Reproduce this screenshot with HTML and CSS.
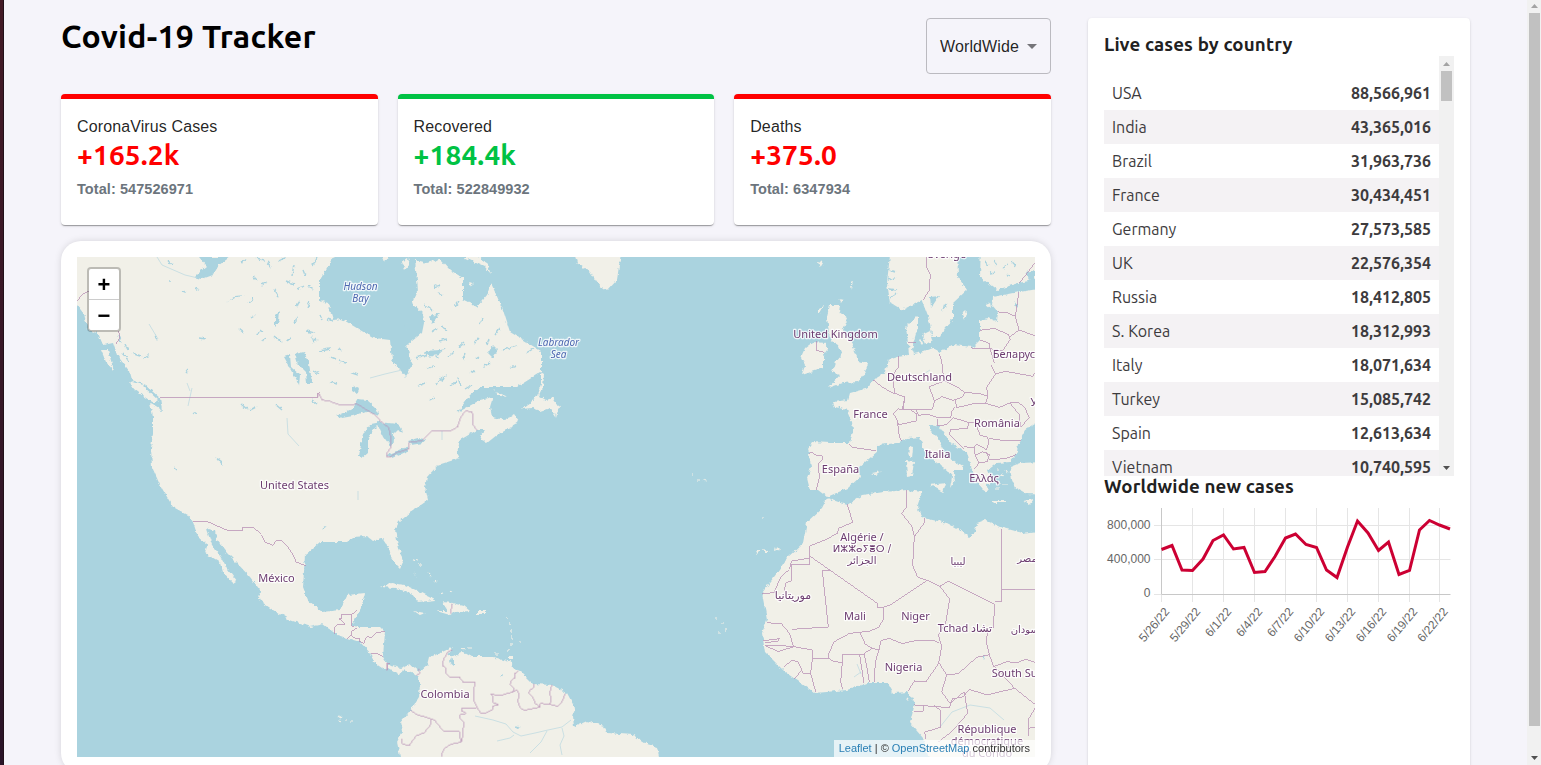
FILE: index.html
```html
<!DOCTYPE html>
<html lang="en">
<head>
<meta charset="utf-8">
<title>Covid-19 Tracker</title>
<link rel="stylesheet" href="styles.css">
</head>
<body>
<div class="window-edge"></div>
<div class="app">
  <main class="app-left">
    <header class="header">
      <h1 class="title">Covid-19 Tracker</h1>
      <div class="select"><span>WorldWide</span><svg class="caret" viewBox="0 0 10 5"><path d="M0 0h10L5 5z"/></svg></div>
    </header>
    <section class="stats">
      <article class="card stat red"><p class="stat-label">CoronaVirus Cases</p><h2 class="stat-value">+165.2k</h2><p class="stat-total">Total: 547526971</p></article>
      <article class="card stat green"><p class="stat-label">Recovered</p><h2 class="stat-value">+184.4k</h2><p class="stat-total">Total: 522849932</p></article>
      <article class="card stat red"><p class="stat-label">Deaths</p><h2 class="stat-value">+375.0</h2><p class="stat-total">Total: 6347934</p></article>
    </section>
    <section class="map-card">
      <div class="map">
        <svg class="map-svg" viewBox="77 257 958 500">
          <defs>
            <filter id="coast" filterUnits="userSpaceOnUse" x="60" y="240" width="990" height="530" color-interpolation-filters="linearRGB">
              <feTurbulence type="fractalNoise" baseFrequency=".22" numOctaves="3" seed="7" result="n"/>
              <feDisplacementMap in="SourceGraphic" in2="n" scale="4.500" xChannelSelector="R" yChannelSelector="G"/>
            </filter>
          </defs>
          <rect class="sea" x="77" y="257" width="958" height="500"/>
          <g filter="url(#coast)">
            <g class="land">
              <!-- Americas -->
              <path d="M65 245H340L333 257 320 280V300L328 303 333 320 342 319 360 330 374 338 390 340 392 360 405 377 412 367 407 345 422 333 424 323 423 313 412 303 418 290 415 260 427 263 440 259 450 270 463 278V300L477 307 487 295 491 283 503 310 510 332 541 351V372L517 387H480L470 395 457 413 480 400 493 397 490 407 492 417 505 420 514 414 519 421 495 433 483 442 480 436 485 430 477 430 460 440 457 453 460 458 438 465 427 477 425 487 428 500 411 512 399 522 395 530 397 540 403 562 400 569 396 565 390 555 388 547 382 538 373 541 367 536 353 537 347 542H320L305 555 303 587 308 600 322 612 340 610 347 595 365 593 360 610 352 625 357 627H380L385 632 383 657 388 665 400 668 410 664 420 672 428 665 430 657 440 653 453 647 447 655 453 657 463 652 472 657H493L512 663 513 668 520 671 533 684 552 685 567 693 575 708 573 717 574 727 587 721 603 726 607 733 633 735 647 744 657 747 662 770H403L397 742 402 732 400 723 412 708 419 697 420 683 418 675 403 670 400 675 388 668 385 670 373 662 372 655 360 642 337 635 323 624 310 627 290 620 273 610 259 600 260 590 250 577 237 563 227 553 217 540 215 531 206 528 212 545 220 555 228 570 236 581 233 583 223 572 220 562 205 553 207 545 198 537 193 522 188 515 173 507 160 485 152 467 151 448 153 433V417L150 403 162 410 160 398 145 385 132 380 130 372 117 355 113 343 103 345 98 333 88 330 84 314 77 305 65 300z"/>
              <path d="M129 381L142 385 158 400 154 403 143 396 134 389zM101 350H108L114 371 106 362zM541 373L541 384 536 398 522 409 532 408 541 411 550 408 556 417 559 407 553 398 546 400 539 396 543 387 544 375zM493 390L508 397 500 396zM482 440L500 427 514 421 517 424 497 435 487 443z"/>
              <path d="M380 587L391 583 405 585 420 592 436 600 418 602 412 594 396 588zM442 602L452 603 464 606 470 611 455 612 450 615 436 611H448zM414 611L425 613 420 615zM477 611H485V614H477zM414 571L417 578 415 574zM509 656H513V660H509zM382 257H390L384 262zM402 262L408 258 410 264 405 270zM463 257L485 267 491 274 487 262 478 257zM470 282L474 284 471 286z"/>
              <!-- Europe, Greenland and islands -->
              <path d="M572 245L577 263 590 272 598 284 607 291 617 280 622 245zM1045 418L1025 430 1018 443 1017 453 1010 462 997 463 988 470 993 482 987 485 988 493 980 488 975 477 971 467 967 453 950 442 940 427 930 425V430L937 437 947 457 963 467V470L953 470 955 480 950 488 952 477 947 470 933 460 923 448 920 437 908 438 897 443 877 445V452L858 468 860 477 848 488 827 497 818 490H810L807 478 811 467 808 448 812 442 830 443H850L853 430 852 422 847 410 835 407 833 402 848 400 850 393 868 388 873 380 885 373 888 360 898 357 909 355 908 343 906 327 918 315V327L915 337 912 349 914 354 923 352 933 348 940 352 953 345 973 347 980 340V320L988 318 997 322 998 312 992 305 993 297 1013 293 1045 288z"/>
              <path d="M891 245L887 283 890 303 902 310 922 300 927 313 933 337H940L945 327 953 320V303L967 290 958 277 957 245zM981 245L980 277 997 290 1018 283 1045 278V245zM922 335L930 331 933 340 926 344zM962 313L967 311 964 321zM918 340L924 342 922 345zM986 304L990 302 991 308z"/>
              <path d="M830 305H840L839 312 848 318 843 330 852 345 858 357V361L868 363 865 373 858 382 843 383 828 388 840 375 832 372 835 363 842 355 838 345 830 340 827 317zM813 342L825 343 828 350 823 357V368L802 375 805 365 801 357 805 348zM819 308L823 306 819 315zM851 283L853 281 851 290zM839 299L843 300 841 303zM818 262L823 263 820 268z"/>
              <path d="M909 447L913 448 912 458 908 455zM906 461L914 462 912 476 907 477zM930 485L946 483 943 492zM992 501L1006 501 1006 503 994 503zM1010 467L1020 463 1045 462V495L1027 494 1015 487 1012 480zM1024 501L1034 499 1030 504zM872 473L882 471 876 475z"/>
              <!-- Africa -->
              <path d="M827 498L847 505 862 495 883 492 907 490 922 492 917 507 923 518 947 523 960 530 970 537 975 532 977 523 985 520 1000 527 1023 533 1045 530V770H932L923 738 910 723 915 703 908 692 893 693 887 683H867L847 690 815 693 785 672 765 652 762 633 767 620 762 593 777 573 787 558 803 543 807 522 822 508zM756 550L760 551 757 554zM763 549L770 552 764 552zM776 546L780 550 775 552zM905 699L909 697 907 701z"/>
            </g>
            <!-- Bahamas, Lesser Antilles, Azores, Cape Verde, Aegean -->
            <path class="isles" d="M413 560l5 1M420 563v3M428 573l3 4M434 580l4 3M441 594l3-1M450 591l3 1M461 648l4 1M468 648l3 0M495 654l3 0M507 617v2M509 623v3M511 630v3M512 636v3M511 643v3M509 649v2M519 642h2M691 475h2M697 480h3M703 480l3 1M715 619h2M718 632h3M725 629v3M721 624h2M762 518h2M338 716l3 2M338 721l4 1M345 720h2M350 722h2M997 470h3M1001 475l3 1M998 482h3M1004 484h3M1006 470l2 3M996 489h3"/>
            <g class="lake">
              <path d="M195 277L202 270 207 266 199 257H230L219 265 213 275 202 279zM226 303L235 296 245 295 232 299zM275 316L280 311 279 323 275 327zM293 323L297 317 296 325zM295 354L304 352 309 363 312 384 307 384 306 372 298 364zM284 357L290 355 291 367 300 375 299 386 292 371zM352 385L359 389 357 394 352 391zM336 416L352 409 358 399 367 400 375 407 379 416 366 411 353 416 342 418zM359 456L363 433 371 424 381 422 373 430 368 440V453L362 458zM377 422L388 423 398 424 404 434 397 430 393 434 394 442 391 447 383 436zM387 455L401 449 410 446 406 452 392 458zM408 441L419 438 426 439 423 443 411 445zM439 380L446 375 443 382zM404 325L410 323 411 332 405 329zM424 351L441 350 448 346 439 354 429 357zM488 353L493 345 498 350 493 358zM428 317L440 313 433 324zM216 457L222 461 222 465zM451 658L454 660 454 666 449 662zM501 675L503 675 500 679zM515 726L521 728 517 729zM930 297L939 296 935 302 931 308zM944 305L948 302 942 312zM1015 301L1018 305 1016 308zM1026 272L1035 270 1035 290zM982 656L986 655 984 660z"/>
            </g>
            <g class="streaks">
              <path d="M241 263l5-4M256 258l8 2M267 262l4 5M279 261l6-3M292 276l2-12M303 270l2 5M313 265l4-8M253 276l4 4M262 285l5-3M274 289l5 7M286 281l8 3M297 290l7-4M248 303l5-4M251 318l5-3M239 329l5 4M256 334l7-3M262 342l3-5M275 337l6 5M286 340l4-2M296 307l4-6M308 285l5 5M310 301l-3 7M312 343l4-6M307 331l7 2M320 315l2 5M327 319l7 2M312 337l5 4M319 351l11-2M331 357l5 2M338 348l5 3M313 370l6 4M346 363l-7-2M312 400l5 4M337 384l-7-2M352 373l6 2M168 261l5 4M182 291l4 1M169 281l2 0M195 288l4 2M199 338l7 1M241 404l7 6M250 410l6-3M275 404l7 6M155 336l3 3M186 373l3-4M144 357l5-2M132 353l9 3M118 336l3 6M125 344l3 6M122 353l7 8M194 412l3 2M434 287l6-2M425 305l7 5M443 295l-5-2M455 306l4-5M432 332l6-4M442 327l5 3M447 339l-8 2M459 347l5-4M465 354l-2 6M476 359l4-3M478 338l-4 5M484 366l6-3M418 386l8-3M442 376l-5 8M450 386l6-4M458 378l3 8M470 371l5 2M465 389l7-4M427 368l7-2M416 358l12-4M430 400l5-3M495 335l5-7M503 350l13-4M526 353l7-4M510 368l6-2M479 324l3-6M489 340l-2 5M435 354l4 4M454 352l-5 5M174 467l2 2M322 529l4-3M889 270l6 2M888 280l7-2M889 289l7 1M891 297l6-4M985 262l4 3M994 260l3 6M1003 268l5-3M1012 261l3 5M990 273l5-1M1006 276l4-2"/>
            </g>
          </g>
          <g class="rivers">
            <path d="M475 716L493 720 506 724 513 732 521 736 535 733 548 730 562 727 571 720M497 741L510 738 514 735M547 731L541 742 530 753M562 728L564 736 560 745 562 755M287 418L288 434 299 446M149 324L158 339M157 257L162 265 185 275 198 278M370 378L385 374 402 370M914 380L930 370M940 727L952 712 970 705 990 708 1004 720M854 677L861 672M857 664L861 674M187 383l3 8M192 388l-4 18M442 431v9M358 491v9"/>
          </g>
          <g class="borders">
            <g transform="translate(60 240) scale(.33333)"><path d="M51 183L68 163 87 153M172 272L179 280V293L168 312M300 472H773V460L781 458"/></g>
            <g transform="translate(310 240) scale(.33333)"><path d="M22 472L27 460 37 480 60 484 85 493 128 496 138 490 198 527 211 543 235 562 240 575 244 620 230 640 229 650 240 651 260 638 298 626 297 606 336 603 367 572 427 571 442 561 452 531 466 513 484 515 490 522V557L502 570"/></g>
            <g transform="translate(60 490) scale(.33333)"><path d="M399 95L438 93 502 121H549V112H581L604 134 615 156 638 166 650 151H663L678 164 700 195 708 216 738 227M824 432V410L832 405H854V400L837 386 845 384V373H875V408L881 410M875 373L892 361M861 446L874 436 873 425 892 413M874 436L885 445 900 445V455L911 460 920 440 935 442 950 428 975 424M934 491L955 492 968 499M982 541V522L990 520"/></g>
            <g transform="translate(380 540) scale(.33333)"><path d="M22 368V392M116 385L119 400 108 407M215 191L213 220M218 329L204 335 191 358 187 377 197 383 199 401 208 411H238L250 427 286 428 282 445V484L291 502 302 520H317L340 507V498L354 494 339 487V470L332 463 365 466 399 455 402 446 390 434 394 422 405 413 403 402 416 391M399 455L411 449 417 462 414 485 420 502 432 511 481 501 466 490 457 470 447 459 450 449 461 444V431M481 501L480 490 510 493 514 475 509 462 515 435M510 493L533 499 544 488 556 462M291 502L286 505H245V514L257 517V522L241 523V536L251 545 249 580 245 606 215 612 194 624 186 640V650M91 510L109 523 152 536 165 542 190 573H233L241 577 238 591 245 606M152 536V554L133 578 108 588 87 617 66 611 65 595"/></g>
            <g transform="translate(780 240) scale(.33333)"><path d="M441 51V83L451 103 448 150 429 181M765 68L718 130M109 302V331L133 337M86 641L94 636 111 647 127 648 126 661 115 672 118 712 109 751M206 613L218 622 257 628 289 632M357 349V379L344 397 340 430 344 460 375 471 369 508M280 420L305 440 335 458 344 460M478 342L485 361 488 397 493 408M384 308L409 307M448 440L493 423 530 440 555 458 546 472 520 481 485 470 463 484ZM375 471L367 507 408 510 458 507 463 484M555 458L597 460 623 469 617 490 586 490 530 503 526 481M617 490L658 502 690 489 717 488 735 504 748 534 722 561 717 523 690 489M634 376L647 402 620 442 623 469M647 402L676 394 759 409 765 398M600 271L643 265 684 283 691 298 668 332 630 326 574 324M600 300L628 310 630 326 643 370M655 216L680 217 706 229 717 270 765 287M706 229L717 155M717 270L691 290M340 520L352 541 356 554 409 543 410 522 390 508 355 507 340 520M352 541L358 589 365 603M409 510L415 526 444 523 471 532 512 533 515 515 524 502M471 536L473 557 500 554 520 533 566 548 562 566 513 568 507 582 552 628M566 548L586 548 600 585 623 592 627 609 619 629 590 612 582 624 553 620M627 595L672 602 723 600M619 635L628 660 680 655 708 644M582 624L586 647 597 669 583 687M586 647L607 635 628 643 622 665 597 669"/></g>
            <g transform="translate(740 490) scale(.33333)"><path d="M322 43L338 97 296 115 293 129 262 147 209 168V225H154V273L138 278 133 302M209 198L412 340V352H431V388L415 413 386 424 329 430 283 455 266 490V505L219 507 216 480 161 470 148 430 125 402 80 398M161 470L128 467 74 466M247 243H273M247 243L265 411 155 418M431 351L452 344 562 271 533 262 518 226 523 140 515 108 485 70 500 50V0M523 140L553 98V83M562 271L600 289 625 273 763 342 761 413 742 415 740 460 748 494 761 530 800 515 830 518 859 508 885 517M600 289L629 328 617 398 595 435 605 470 596 520 558 575 523 573 505 602M785 118V334H764M785 298H885M361 430L376 463 398 475 417 480 406 515 403 575M417 480L423 452 447 445 487 461 521 453 583 452 598 460M398 475L372 490 381 535 388 577M372 493H309L302 575 308 598M359 495L372 580M266 505L280 514 309 518M217 507L212 550 227 605M131 530L155 512 173 514 190 550 212 550M163 568L182 544M74 466L115 485 161 470M70 452L119 446 111 455 75 457M598 520L620 555 655 551 710 502 748 494M620 555L605 605 630 640 673 605 683 670 635 725 595 756M523 645L628 653 637 627 670 620 688 598 740 615 824 595 770 536 760 528M523 664H550V645M581 645L600 660 602 712 576 720 554 725 557 746M824 595L885 643M885 655L864 690 867 737M864 715L885 712M67 311L102 308 122 262 148 238 155 213 209 204"/></g>
          </g>
          <g class="places" text-anchor="middle">
            <text x="294.500" y="489">United States</text><text x="276.500" y="582">México</text><text x="445" y="698">Colombia</text><text x="835.500" y="338">United Kingdom</text><text x="919.500" y="381">Deutschland</text><text x="870.500" y="418">France</text><text x="840.500" y="473">España</text><text x="937.500" y="458">Italia</text><text x="997" y="427">România</text><text x="984" y="482">Ελλάς</text><text x="1017" y="358">Беларусь</text><text x="1051" y="406">Україна</text><text x="947" y="258">Sverige</text>
            <text x="862" y="541">Algérie /</text><text class="script" x="862" y="552">ⵍⵣⵣⴰⵢⴻⵔ /</text><text class="script" x="862" y="564">الجزائر</text><text class="script" x="958" y="565">ليبيا</text><text class="script" x="1027" y="562">مصر</text><text class="script wide" x="793" y="599">موريتانيا</text><text x="855" y="620">Mali</text><text x="915.500" y="620">Niger</text><text x="965" y="632">Tchad تشاد</text><text class="script" x="1028" y="633">السودان</text><text x="903.500" y="671">Nigeria</text><text x="1024.500" y="677">South Sudan</text><text x="987" y="733">République</text><text x="987" y="745">démocratique</text><text x="987" y="757">du Congo</text>
          </g>
          <g class="waters" text-anchor="middle"><text x="360.500" y="290">Hudson</text><text x="360.500" y="302">Bay</text><text x="558.500" y="346">Labrador</text><text x="558.500" y="358">Sea</text></g>
        </svg>
        <div class="zoom"><span>+</span><span>−</span></div>
        <div class="credit"><a>Leaflet</a> | © <a>OpenStreetMap</a> contributors</div>
      </div>
    </section>
  </main>
  <aside class="card side">
    <h3 class="side-title">Live cases by country</h3>
    <div class="list">
      <div class="rows">
        <div class="row"><span>USA</span><b>88,566,961</b></div>
        <div class="row"><span>India</span><b>43,365,016</b></div>
        <div class="row"><span>Brazil</span><b>31,963,736</b></div>
        <div class="row"><span>France</span><b>30,434,451</b></div>
        <div class="row"><span>Germany</span><b>27,573,585</b></div>
        <div class="row"><span>UK</span><b>22,576,354</b></div>
        <div class="row"><span>Russia</span><b>18,412,805</b></div>
        <div class="row"><span>S. Korea</span><b>18,312,993</b></div>
        <div class="row"><span>Italy</span><b>18,071,634</b></div>
        <div class="row"><span>Turkey</span><b>15,085,742</b></div>
        <div class="row"><span>Spain</span><b>12,613,634</b></div>
        <div class="row"><span>Vietnam</span><b>10,740,595</b></div>
      </div>
      <div class="bar list-bar"><svg class="arrow up" viewBox="0 0 7 4"><path d="M0 4h7L3.500 0z"/></svg><i class="thumb"></i><svg class="arrow down" viewBox="0 0 7 4"><path d="M0 0h7L3.500 4z"/></svg></div>
    </div>
    <h3 class="side-title">Worldwide new cases</h3>
    <svg class="chart" viewBox="1104 500 350 150">
      <g class="grid">
        <path d="M1154 525.500H1450.500M1154 559.500H1450.500M1192.500 508V602M1223.500 508V602M1254.500 508V602M1285.500 508V602M1316.500 508V602M1347.500 508V602M1378.500 508V602M1409.500 508V602M1439.500 508V602M1154 594.500H1161M1161.500 595V602"/>
        <path class="axis" d="M1161.500 508V594.500H1450.500"/>
      </g>
      <polyline class="line" points="1161.500,549.500 1172,545.500 1182,570 1192.500,570.500 1203,559 1213,540.500 1223.500,535 1233.500,549 1244,547.500 1254.500,572.500 1265,571.500 1275,556.500 1285.500,538 1295.500,534 1306,544.500 1316.500,547.500 1326.500,570 1337,577.500 1347.500,547 1357.500,521 1368,533 1378.500,550.500 1388.500,542 1399,574.500 1409.500,570.500 1419.500,530 1429.500,520.500 1439.500,525 1450,529"/>
      <g class="ticks" text-anchor="end">
        <text x="1150.500" y="529">800,000</text><text x="1150.500" y="563">400,000</text><text x="1150.500" y="597">0</text>
        <text transform="translate(1170 612) rotate(-50)">5/26/22</text><text transform="translate(1201 612) rotate(-50)">5/29/22</text><text transform="translate(1232 612) rotate(-50)">6/1/22</text><text transform="translate(1263 612) rotate(-50)">6/4/22</text><text transform="translate(1294 612) rotate(-50)">6/7/22</text><text transform="translate(1325 612) rotate(-50)">6/10/22</text><text transform="translate(1356 612) rotate(-50)">6/13/22</text><text transform="translate(1387 612) rotate(-50)">6/16/22</text><text transform="translate(1418 612) rotate(-50)">6/19/22</text><text transform="translate(1448.500 612) rotate(-50)">6/22/22</text>
      </g>
    </svg>
  </aside>
</div>
<div class="bar page-bar"><svg class="arrow up" viewBox="0 0 7 4"><path d="M0 4h7L3.500 0z"/></svg><i class="thumb"></i><svg class="arrow down" viewBox="0 0 7 4"><path d="M0 0h7L3.500 4z"/></svg></div>
</body>
</html>
```
FILE: styles.css
```css
* { box-sizing: border-box; margin: 0; }
body { display: flex; height: 765px; overflow: hidden; background: #f5f4fa; color: #000; font: 16px/1.5 "Liberation Sans", sans-serif; }
.window-edge { flex: none; width: 4px; background: linear-gradient(#431a26, #2a1428); border-right: 1px solid #211019; }
.app { flex: 1; display: flex; gap: 37px; padding: 18px 57px 0; align-items: flex-start; }
.app-left { width: 990px; }
.header { display: flex; justify-content: space-between; align-items: flex-start; height: 76px; }
.title { font: 700 32px/37px Ubuntu, "Noto Sans", sans-serif; letter-spacing: .3px; }
.select { width: 125px; height: 56px; border: 1px solid #bbbac0; border-radius: 4px; display: flex; align-items: center; gap: 8px; padding: 1px 0 0 13px; letter-spacing: .12px; color: rgba(0,0,0,.87); }
.caret { width: 10px; height: 5px; fill: #757479; }
.card { background: #fff; border-radius: 4px; box-shadow: 0 2px 1px -1px rgba(0,0,0,.2), 0 1px 1px rgba(0,0,0,.14), 0 1px 3px rgba(0,0,0,.12); }
.stats { display: grid; grid-template-columns: repeat(3, 1fr); gap: 19.800px; }
.stat { height: 131px; padding: 16px; border-top: 5px solid red; overflow: hidden; }
.stat-label { line-height: 24px; letter-spacing: .12px; color: rgba(0,0,0,.87); }
.stat-value { font: 700 28px/32px Ubuntu, "Noto Sans", sans-serif; letter-spacing: .15px; color: red; }
.green { border-color: #00c244; }
.green .stat-value { color: #00c244; }
.stat-total { font-size: 14.500px; font-weight: 700; line-height: 20px; letter-spacing: .07px; margin-top: 8px; color: #6c757d; }
.map-card { margin-top: 16px; height: 532px; padding: 16px; background: #fff; border-radius: 20px; box-shadow: 0 0 8px -2px rgba(0,0,0,.22); }
.map { position: relative; height: 500px; overflow: hidden; }
.map-svg { display: block; width: 958px; height: 500px; }
.sea, .lake { fill: #aad3df; }
.land { fill: #f1f0e8; }
.isles { fill: none; stroke: #f1f0e8; stroke-width: 1.200; }
.streaks { fill: none; stroke: #aad3df; stroke-width: 1.400; }
.rivers { fill: none; stroke: #aad3df; stroke-width: .8; opacity: .7; }
.borders { fill: none; stroke: #b78fb4; stroke-width: 2.800; opacity: .8; shape-rendering: crispEdges; }
.places, .waters { font: 11px "Noto Sans", "DejaVu Sans", sans-serif; paint-order: stroke; stroke: rgba(255,255,255,.8); stroke-width: 2.500px; stroke-linejoin: round; }
.places { fill: #6c3c70; }
.script { font-family: "DejaVu Sans", sans-serif; font-size: 10px; }
.wide { font-size: 11px; }
.waters { fill: #4d67b0; font-size: 10px; font-style: italic; }
.zoom { position: absolute; left: 10px; top: 10px; width: 34px; border: 2px solid rgba(0,0,0,.22); border-radius: 4px; background: #fff; background-clip: padding-box; }
.zoom span { display: block; height: 30px; font: 700 22px/32px "Liberation Sans", sans-serif; text-align: center; }
.zoom span:first-child { height: 31px; border-bottom: 1px solid #ccc; }
.credit { position: absolute; right: 0; bottom: 0; padding: 0 5px; background: rgba(255,255,255,.7); color: #333; font-size: 11px; line-height: 17px; }
.credit a { color: #2a7fb5; }
.side { width: 382px; height: 780px; padding: 16px; color: #212121; }
.side-title { font: 700 18.720px/22px Ubuntu, "Noto Sans", sans-serif; letter-spacing: .14px; height: 22px; }
.list { height: 420px; display: flex; overflow: hidden; }
.rows { flex: 1; padding-top: 20px; }
.row { display: flex; justify-content: space-between; height: 34px; padding: 0 8px; font: 16px/34px Ubuntu, "Noto Sans", sans-serif; color: #3d3b3d; }
.row:nth-child(even) { background: #f4f2f4; }
.bar { background: #f1f1f1; display: flex; flex-direction: column; align-items: center; }
.list-bar { width: 15px; padding: 6px 0; }
.thumb { display: block; width: 11px; background: #c1c1c1; }
.list-bar .thumb { height: 30px; margin-top: 5px; }
.arrow { flex: none; width: 7px; height: 4px; fill: #a3a3a3; }
.down { margin-top: auto; fill: #505050; }
.page-bar { flex: none; width: 14px; padding: 4px 0 5px; }
.page-bar .thumb { height: 713px; margin-top: 5px; }
.chart { display: block; width: 350px; height: 150px; margin-top: 2px; }
.grid { fill: none; stroke: #e5e5e5; }
.axis { stroke: #c8c8c8; }
.line { fill: none; stroke: #cc0033; stroke-width: 3; }
.ticks { font: 12px "Liberation Sans", sans-serif; fill: #666; }
```
